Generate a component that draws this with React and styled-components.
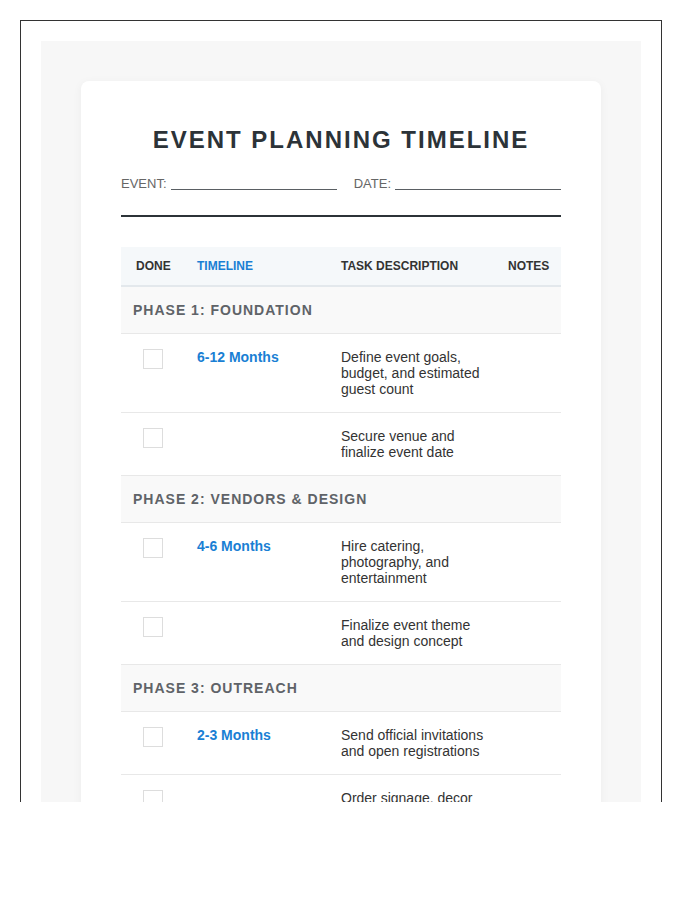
import styled, { createGlobalStyle } from "styled-components";

const GlobalStyle = createGlobalStyle`
    body {
        margin: 0;
        background: #ffffff;
        font-family: "Liberation Sans", Arial, sans-serif;
        color: #333333;
    }
`;

const Frame = styled.div`
    box-sizing: border-box;
    width: 642px;
    height: 782px;
    margin: 20px 0 0 20px;
    border: 1px solid #333333;
    border-bottom: none;
    overflow: hidden;
`;

const Backdrop = styled.div`
    margin: 20px 20px 0;
    padding: 40px;
    background-color: #f7f7f7;
`;

const Card = styled.div`
    background-color: #ffffff;
    border-radius: 8px;
    padding: 41px 40px 40px;
    box-shadow: 0 2px 10px rgba(0, 0, 0, 0.05);
`;

const Header = styled.header`
    padding-bottom: 24px;
    border-bottom: 2px solid #2c3338;
    margin-bottom: 30px;
`;

const Title = styled.h1`
    margin: 0 0 18px;
    font-size: 24px;
    line-height: 36px;
    font-weight: 700;
    letter-spacing: 2px;
    text-align: center;
    text-transform: uppercase;
    color: #2c3338;
`;

const InfoRow = styled.div`
    display: flex;
    justify-content: space-between;
    font-size: 13px;
    color: #666666;
`;

const Field = styled.div`
    display: flex;
    align-items: baseline;
    gap: 4px;
`;

const BlankLine = styled.span`
    display: inline-block;
    width: 166px;
    border-bottom: 1px solid #5a5f63;
    position: relative;
    top: 2px;
`;

const Table = styled.div`
    display: grid;
    grid-template-columns: 61px 144px 167px 68px;
`;

const HeadCell = styled.div`
    padding: 12px 15px;
    background-color: #f5f8fa;
    border-bottom: 2px solid #e3e8ec;
    font-size: 12px;
    font-weight: 700;
    text-transform: uppercase;
    color: ${(p) => (p.$accent ? "#1a7fd4" : "#333333")};
`;

const PhaseRow = styled.div`
    grid-column: 1 / -1;
    padding: 15px 12px;
    background-color: #f9f9f9;
    border-bottom: 1px solid #e8e8e8;
    font-size: 14px;
    font-weight: 700;
    letter-spacing: 1px;
    text-transform: uppercase;
    color: #5f6368;
`;

const Cell = styled.div`
    padding: ${(p) => p.$pad || "15px"};
    border-bottom: 1px solid #e8e8e8;
    font-size: 14px;
`;

const CheckBox = styled.span`
    display: block;
    box-sizing: border-box;
    width: 20px;
    height: 20px;
    border: 1px solid #dddddd;
    background: #ffffff;
`;

const Timing = styled.span`
    font-weight: 700;
    color: #1a7fd4;
`;

const phases = [
    {
        title: "Phase 1: Foundation",
        tasks: [
            { time: "6-12 Months", desc: "Define event goals, budget, and estimated guest count" },
            { time: "", desc: "Secure venue and finalize event date" },
        ],
    },
    {
        title: "Phase 2: Vendors & Design",
        tasks: [
            { time: "4-6 Months", desc: "Hire catering, photography, and entertainment" },
            { time: "", desc: "Finalize event theme and design concept" },
        ],
    },
    {
        title: "Phase 3: Outreach",
        tasks: [
            { time: "2-3 Months", desc: "Send official invitations and open registrations" },
            { time: "", desc: "Order signage, decor and printed materials" },
        ],
    },
];

const App = () => {
    return (
        <>
            <GlobalStyle />
            <Frame>
                <Backdrop>
                    <Card>
                        <Header>
                            <Title>Event Planning Timeline</Title>
                            <InfoRow>
                                <Field>EVENT: <BlankLine /></Field>
                                <Field>DATE: <BlankLine /></Field>
                            </InfoRow>
                        </Header>
                        <Table>
                            <HeadCell>Done</HeadCell>
                            <HeadCell $accent>Timeline</HeadCell>
                            <HeadCell>Task Description</HeadCell>
                            <HeadCell>Notes</HeadCell>
                            {phases.map((phase) => (
                                <>
                                    <PhaseRow key={phase.title}>{phase.title}</PhaseRow>
                                    {phase.tasks.map((task) => (
                                        <>
                                            <Cell $pad="15px 15px 15px 22px"><CheckBox /></Cell>
                                            <Cell><Timing>{task.time}</Timing></Cell>
                                            <Cell $pad="15px 4px 15px 15px">{task.desc}</Cell>
                                            <Cell />
                                        </>
                                    ))}
                                </>
                            ))}
                        </Table>
                    </Card>
                </Backdrop>
            </Frame>
        </>
    );
};

export default App;
